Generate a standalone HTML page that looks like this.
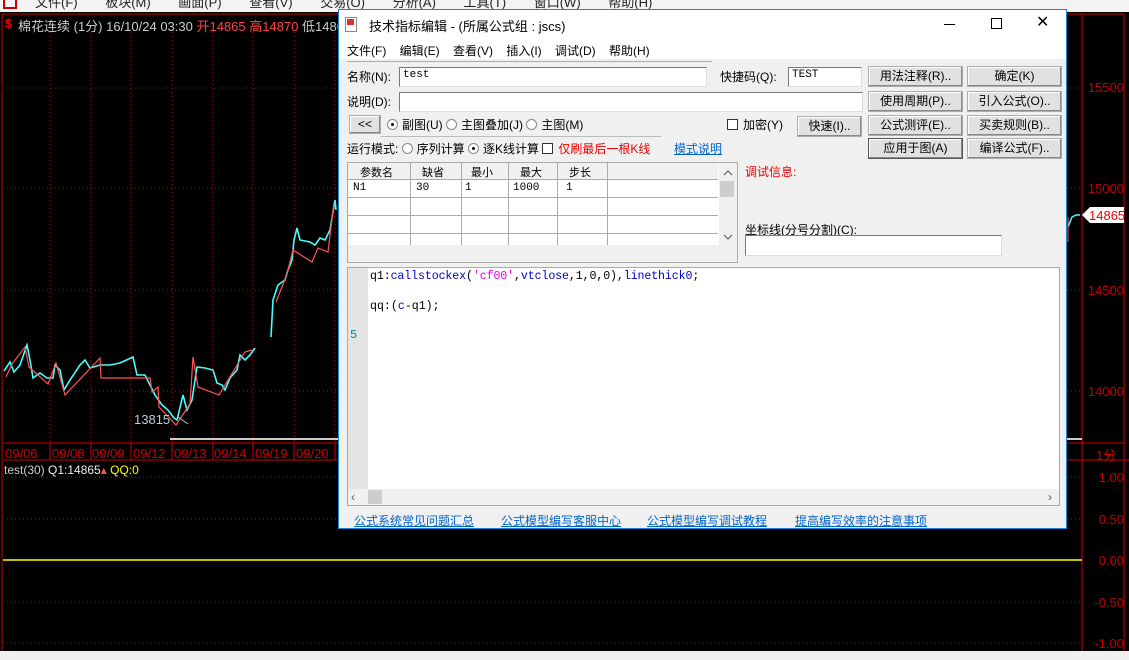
<!DOCTYPE html>
<html><head><meta charset="utf-8"><style>
*{margin:0;padding:0;box-sizing:border-box}
body{width:1129px;height:660px;overflow:hidden;background:#000;position:relative;font-family:"Liberation Sans","Noto Sans CJK SC",sans-serif;font-size:12px}
.a{position:absolute;white-space:nowrap}
.dlg{position:absolute;left:338px;top:9px;width:729px;height:520px;background:#f0f0f0;border:1px solid #1883d7}
.in{position:absolute;background:#fff;border:1px solid #7a7a7a;border-right-color:#ddd;border-bottom-color:#ddd;font-family:"Liberation Mono","Noto Sans CJK SC",monospace;font-size:11px;padding:1px 3px}
.btn{position:absolute;width:95px;height:21px;background:#e1e1e1;border:1px solid #adadad;box-shadow:inset -1px -1px #888,inset 1px 1px #fff;text-align:center;line-height:19px;font-size:12px}
.rad{display:inline-block;width:11px;height:11px;border:1px solid #888;border-radius:50%;background:#fff;vertical-align:-1px;margin-right:4px;position:relative}
.rad.on:after{content:"";position:absolute;left:3px;top:3px;width:3px;height:3px;background:#000;border-radius:50%}
.chk{display:inline-block;width:11px;height:11px;border:1px solid #333;background:#fff;vertical-align:-1px;margin-right:5px}
.lnk{color:#0066cc;text-decoration:underline}
.ax{position:absolute;color:#c00000;font-size:13px;right:5px}
.dt{position:absolute;top:446px;color:#d00000;font-size:13px}
</style></head><body>
<div class="a" style="left:0;top:0;width:1129px;height:12px;background:#f3f3f3;overflow:hidden">
<div class="a" style="left:3px;top:-3px;width:14px;height:12px;border:2px solid #c00"></div>
<div class="a" style="left:35px;top:-8px;font-size:13px;color:#222;word-spacing:24px">文件(F) 板块(M) 画面(P) 查看(V) 交易(O) 分析(A) 工具(T) 窗口(W) 帮助(H)</div>
</div>
<svg class="a" style="left:0;top:12px" width="1129" height="648">
<rect x="2" y="2" width="1122" height="646" fill="none" stroke="#d00000" stroke-width="1"/>
<g stroke="#c00000" stroke-dasharray="1,3">
<line x1="3" x2="1082" y1="76" y2="76"/><line x1="3" x2="1082" y1="176" y2="176"/><line x1="3" x2="1082" y1="278" y2="278"/><line x1="3" x2="1082" y1="379" y2="379"/>
<line x1="50" x2="50" y1="20" y2="431"/><line x1="91" x2="91" y1="20" y2="431"/><line x1="131" x2="131" y1="20" y2="431"/><line x1="172" x2="172" y1="20" y2="431"/><line x1="213" x2="213" y1="20" y2="431"/><line x1="253" x2="253" y1="20" y2="431"/><line x1="294" x2="294" y1="20" y2="431"/><line x1="335" x2="335" y1="20" y2="431"/>
<line x1="3" x2="1082" y1="465" y2="465"/><line x1="3" x2="1082" y1="507" y2="507"/><line x1="3" x2="1082" y1="590" y2="590"/><line x1="3" x2="1082" y1="631" y2="631"/>
</g>
<g stroke="#d00000"><line x1="1082" x2="1082" y1="2" y2="648"/><line x1="1124" x2="1124" y1="2" y2="648"/>
<line x1="3" x2="1124" y1="431" y2="431"/><line x1="3" x2="1129" y1="448" y2="448"/>
<line x1="50" x2="50" y1="431" y2="448"/><line x1="91" x2="91" y1="431" y2="448"/><line x1="131" x2="131" y1="431" y2="448"/><line x1="172" x2="172" y1="431" y2="448"/><line x1="213" x2="213" y1="431" y2="448"/><line x1="253" x2="253" y1="431" y2="448"/><line x1="294" x2="294" y1="431" y2="448"/><line x1="335" x2="335" y1="431" y2="448"/></g>
<line x1="3" x2="1082" y1="548" y2="548" stroke="#ffff00" stroke-width="1.5"/>
<line x1="170" x2="1082" y1="427" y2="427" stroke="#ccc" stroke-width="2"/>
<polyline fill="none" stroke="#4ff" stroke-width="1.6" points="4,359 10,350 14,360 20,353 27,333 30,348 33,366 40,361 47,366 53,366 55,353 60,358 64,378 70,368 80,353 85,348 90,356 100,353 110,353 120,351 133,345 137,363 145,363 150,373 155,383 162,393 168,398 174,406 177,408 183,383 187,398 192,388 197,355 205,356 213,358 217,371 222,373 225,378 230,366 237,358 240,343 245,348 250,343 255,336"/>
<polyline fill="none" stroke="#f55" stroke-width="1.2" points="6,365 12,352 25,335 29,355 48,372 56,351 65,383 100,346 101,366 150,366 152,380 158,375 159,395 176,413 190,392 193,345 198,375 219,383 245,340 252,338"/>
<polyline fill="none" stroke="#4ff" stroke-width="1.6" points="271,325 273,288 278,273 285,268 288,258 292,248 294,228 297,216 300,228 310,230 315,233 320,226 325,228 330,218 335,188 336,198"/>
<polyline fill="none" stroke="#f55" stroke-width="1.2" points="276,290 280,280 287,262 293,238 312,250 318,236 328,240 334,190"/>
<line x1="178" y1="405" x2="188" y2="412" stroke="#ccc"/>
<polyline fill="none" stroke="#4ff" stroke-width="1.5" points="1068,215 1072,205 1076,203 1080,203"/>
<line x1="1068" y1="205" x2="1068" y2="230" stroke="#f55"/>
<polygon points="1082,203 1090,195 1124,195 1124,211 1090,211" fill="#fff"/>
</svg>
<div class="a" style="left:5px;top:16px;color:#e00;font-weight:bold;font-size:13px">$</div>
<div class="a" style="left:18px;top:16px;color:#ccc;font-size:13px">棉花连续 (1分) 16/10/24 03:30 <span style="color:#f44">开14865 高14870</span> 低14865</div>
<div class="a" style="left:134px;top:412px;color:#bcd;font-size:13px">13815</div>
<div class="dt" style="left:5px">09/06</div><div class="dt" style="left:52px">09/08</div><div class="dt" style="left:92px">09/09</div><div class="dt" style="left:133px">09/12</div><div class="dt" style="left:174px">09/13</div><div class="dt" style="left:214px">09/14</div><div class="dt" style="left:255px">09/19</div><div class="dt" style="left:296px">09/20</div>
<div class="a" style="left:1096px;top:445px;color:#d00000;font-size:13px">1分</div>
<div class="ax" style="top:80px">15500</div><div class="ax" style="top:181px">15000</div><div class="ax" style="top:283px">14500</div><div class="ax" style="top:384px">14000</div>
<div class="a" style="left:1089px;top:208px;color:#e00;font-size:13px">14865</div>
<div class="ax" style="top:470px">1.00</div><div class="ax" style="top:512px">0.50</div><div class="ax" style="top:553px">0.00</div><div class="ax" style="top:595px">-0.50</div><div class="ax" style="top:636px">-1.00</div>
<div class="a" style="left:4px;top:463px;color:#ccc;font-size:12px">test(30) <span style="color:#eee">Q1:14865</span><span style="color:#f55">▴</span> <span style="color:#ff0">QQ:0</span></div>
<div class="a" style="left:0;top:651px;width:1129px;height:9px;background:#f0f0f0"></div>
<div class="dlg">
<div class="a" style="left:0;top:0;width:727px;height:29px;background:#fff"></div>
<div class="a" style="left:6px;top:7px;width:12px;height:15px;border:1px solid #888;background:#fff"><div style="width:7px;height:6px;background:#d33;margin:1px"></div></div>
<div class="a" style="left:30px;top:6px;font-size:13px;color:#000">技术指标编辑 - (所属公式组 : jscs)</div>
<div class="a" style="left:605px;top:14px;width:11px;height:1px;background:#000"></div>
<div class="a" style="left:652px;top:8px;width:11px;height:11px;border:1px solid #000"></div>
<div class="a" style="left:697px;top:2px;font-size:16px">✕</div>
<div class="a" style="left:0;top:29px;width:727px;height:20px;background:#fff"></div>
<div class="a" style="left:8px;top:32px;word-spacing:10px">文件(F) 编辑(E) 查看(V) 插入(I) 调试(D) 帮助(H)</div>
<div class="a" style="left:8px;top:51px;width:365px;height:1px;background:#aaa"></div>
<div class="a" style="left:8px;top:58px">名称(N):</div>
<div class="in" style="left:60px;top:57px;width:308px;height:20px">test</div>
<div class="a" style="left:381px;top:58px">快捷码(Q):</div>
<div class="in" style="left:449px;top:57px;width:74px;height:20px">TEST</div>
<div class="a" style="left:8px;top:83px">说明(D):</div>
<div class="in" style="left:60px;top:82px;width:464px;height:20px"></div>
<div class="btn" style="left:10px;top:105px;width:32px;height:19px;line-height:17px">&lt;&lt;</div>
<div class="a" style="left:48px;top:106px"><span class="rad on"></span>副图(U) <span class="rad"></span>主图叠加(J) <span class="rad"></span>主图(M)</div>
<div class="a" style="left:388px;top:106px"><span class="chk"></span>加密(Y)</div>
<div class="btn" style="left:458px;top:106px;width:65px">快速(I)..</div>
<div class="a" style="left:42px;top:126px;width:280px;height:1px;background:#bbb"></div>
<div class="a" style="left:8px;top:130px">运行模式: <span class="rad"></span>序列计算 <span class="rad on"></span>逐K线计算 <span class="chk"></span><span style="color:#e00">仅刷最后一根K线</span></div>
<div class="a lnk" style="left:335px;top:130px">模式说明</div>
<div class="btn" style="left:529px;top:56px">用法注释(R)..</div><div class="btn" style="left:628px;top:56px">确定(K)</div>
<div class="btn" style="left:529px;top:81px">使用周期(P)..</div><div class="btn" style="left:628px;top:81px">引入公式(O)..</div>
<div class="btn" style="left:529px;top:105px">公式测评(E)..</div><div class="btn" style="left:628px;top:105px">买卖规则(B)..</div>
<div class="btn" style="left:529px;top:128px;border-color:#555">应用于图(A)</div><div class="btn" style="left:628px;top:128px">编译公式(F)..</div>
<div class="a" style="left:8px;top:152px;width:391px;height:101px;background:#fff;border:1px solid #aaa;font-family:'Liberation Mono','Noto Sans CJK SC',monospace;font-size:11px">
<svg class="a" style="left:0;top:0" width="389" height="99">
<rect x="0" y="0" width="370" height="16" fill="#f0f0f0"/>
<g stroke="#aaa"><line x1="0" x2="370" y1="16.5" y2="16.5"/><line x1="0" x2="370" y1="34.5" y2="34.5"/><line x1="0" x2="370" y1="52.5" y2="52.5"/><line x1="0" x2="370" y1="70.5" y2="70.5"/>
<line x1="62.5" x2="62.5" y1="0" y2="82"/><line x1="113.5" x2="113.5" y1="0" y2="82"/><line x1="160.5" x2="160.5" y1="0" y2="82"/><line x1="209.5" x2="209.5" y1="0" y2="82"/><line x1="259.5" x2="259.5" y1="0" y2="82"/></g>
<rect x="371" y="0" width="18" height="82" fill="#f0f0f0"/><rect x="372" y="18" width="14" height="16" fill="#cdcdcd"/>
<rect x="0" y="82" width="389" height="17" fill="#f0f0f0"/>
<path d="M376 12l4-4 4 4M376 72l4 4 4-4" stroke="#555" fill="none"/>
</svg>
<div class="a" style="left:12px;top:1px">参数名</div><div class="a" style="left:74px;top:1px">缺省</div><div class="a" style="left:123px;top:1px">最小</div><div class="a" style="left:172px;top:1px">最大</div><div class="a" style="left:221px;top:1px">步长</div>
<div class="a" style="left:5px;top:19px">N1</div><div class="a" style="left:68px;top:19px">30</div><div class="a" style="left:117px;top:19px">1</div><div class="a" style="left:165px;top:19px">1000</div><div class="a" style="left:218px;top:19px">1</div>
</div>
<div class="a" style="left:406px;top:153px;color:#e00">调试信息:</div>
<div class="a" style="left:406px;top:211px">坐标线(分号分割)(C):</div>
<div class="in" style="left:406px;top:225px;width:257px;height:21px"></div>
<div class="a" style="left:8px;top:257px;width:713px;height:239px;background:#fff;border:1px solid #aaa">
<div class="a" style="left:0;top:0;width:20px;height:221px;background:#e4e4e4"></div>
<div class="a" style="left:0;top:221px;width:711px;height:16px;background:#f0f0f0"></div>
<div class="a" style="left:20px;top:222px;width:14px;height:14px;background:#cdcdcd"></div>
<div class="a" style="left:3px;top:222px;color:#555">‹</div><div class="a" style="left:700px;top:222px;color:#555">›</div>
<div class="a" style="left:22px;top:2px;font-family:'Liberation Mono',monospace;font-size:11.6px;letter-spacing:-0.1px">q1:<span style="color:#00c">callstockex</span>(<span style="color:#e0e">'cf00'</span>,<span style="color:#00c">vtclose</span>,1,0,0),<span style="color:#00c">linethick0</span>;</div>
<div class="a" style="left:22px;top:32px;font-family:'Liberation Mono',monospace;font-size:11.6px">qq:(<span style="color:#00c">c</span>-q1);</div>
<div class="a" style="left:2px;top:60px;color:#088;font-family:'Liberation Mono',monospace">5</div>
</div>
<div class="a lnk" style="left:15px;top:502px">公式系统常见问题汇总</div>
<div class="a lnk" style="left:162px;top:502px">公式模型编写客服中心</div>
<div class="a lnk" style="left:308px;top:502px">公式模型编写调试教程</div>
<div class="a lnk" style="left:456px;top:502px">提高编写效率的注意事项</div>
</div>
</body></html>
